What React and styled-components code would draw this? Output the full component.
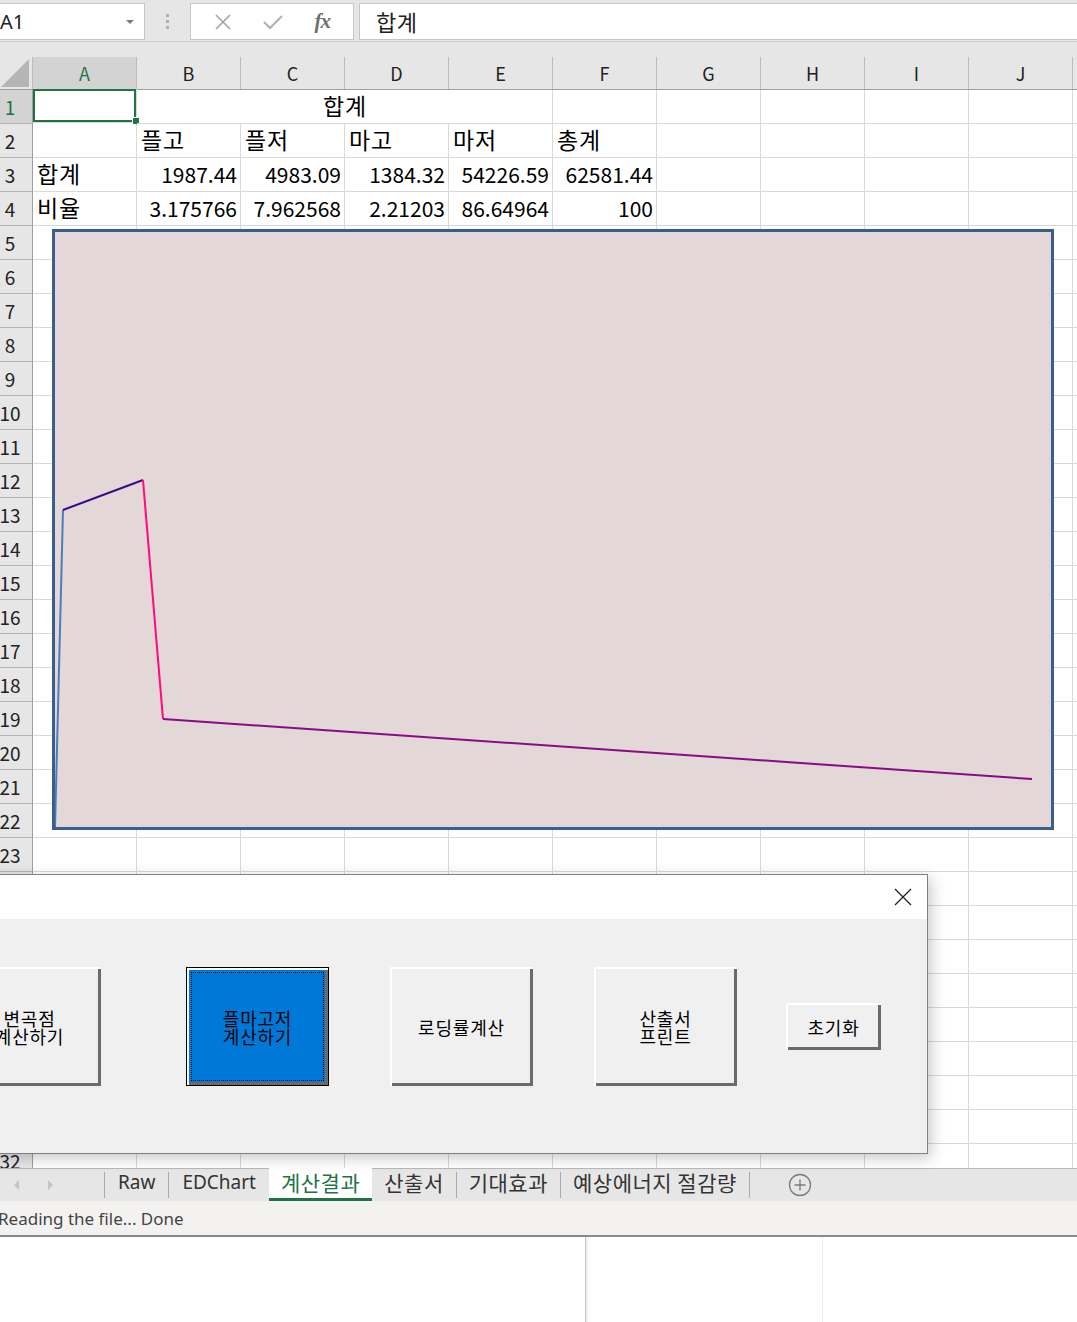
import React from 'react';
import styled, { createGlobalStyle } from 'styled-components';

const GlobalStyle = createGlobalStyle`
  html, body { margin: 0; padding: 0; background: #fff; }
  body { font-family: "Noto Sans CJK KR", "Noto Sans", sans-serif; }
  * { box-sizing: border-box; }
`;

const KR = `"Noto Sans CJK KR", "Noto Sans", sans-serif`;
const UI = `"Noto Sans", "Noto Sans CJK KR", sans-serif`;
const GREEN = '#217346';
const COLS = ['A', 'B', 'C', 'D', 'E', 'F', 'G', 'H', 'I', 'J', ''];
const TEMPLATE = '33px repeat(11, 104px)';
const isKorean = (s) => /[가-힣]/.test(s || '');

const rows = [
  { n: 1, cells: [{ v: '', sel: true }, { v: '합계', span: 4, align: 'center' }] },
  { n: 2, cells: [{ v: '' }, { v: '플고' }, { v: '플저' }, { v: '마고' }, { v: '마저' }, { v: '총계' }] },
  { n: 3, cells: [{ v: '합계' }, { v: '1987.44', align: 'right' }, { v: '4983.09', align: 'right' }, { v: '1384.32', align: 'right' }, { v: '54226.59', align: 'right' }, { v: '62581.44', align: 'right' }] },
  { n: 4, cells: [{ v: '비율' }, { v: '3.175766', align: 'right' }, { v: '7.962568', align: 'right' }, { v: '2.21203', align: 'right' }, { v: '86.64964', align: 'right' }, { v: '100', align: 'right' }] },
];

const Page = styled.div`
  position: relative;
  width: 1077px;
  height: 1322px;
  overflow: hidden;
  background: #fff;
`;

/* formula bar */
const FormulaBar = styled.div`
  display: flex;
  height: 42px;
  padding-top: 3px;
  padding-bottom: 1px;
  background: #e6e6e6;
  border-bottom: 1px solid #d0d0d0;
`;

const NameBox = styled.div`
  width: 146px;
  margin-left: -1px;
  background: #fff;
  border: 1px solid #c6c6c6;
  font-family: ${UI};
  font-size: 20px;
  color: #222;
  display: flex;
  align-items: center;
`;

const DropArrow = styled.span`
  margin-left: auto;
  margin-right: 10px;
  width: 0;
  height: 0;
  border-left: 4px solid transparent;
  border-right: 4px solid transparent;
  border-top: 4px solid #7a7a7a;
`;

const Grip = styled.div`
  width: 45px;
  display: flex;
  flex-direction: column;
  align-items: center;
  justify-content: center;
  gap: 3px;
  span {
    width: 3px;
    height: 3px;
    background: #b0b0b0;
  }
`;

const FxBox = styled.div`
  width: 164px;
  background: #fff;
  border: 1px solid #c6c6c6;
  display: flex;
  align-items: center;
  justify-content: space-around;
  padding: 0 8px;
`;

const FxText = styled.span`
  font-family: "Liberation Serif", serif;
  font-style: italic;
  font-weight: 700;
  font-size: 21px;
  color: #707070;
  letter-spacing: -1px;
`;

const FormulaInput = styled.div`
  flex: 1;
  margin-left: 5px;
  margin-right: -2px;
  background: #fff;
  border: 1px solid #c6c6c6;
  font-family: ${KR};
  font-size: 22px;
  letter-spacing: 0.5px;
  color: #222;
  display: flex;
  align-items: center;
  padding: 0 0 2px 16px;
`;

/* sheet */
const Sheet = styled.div`
  position: relative;
  height: 1126px;
  overflow: hidden;
  background: #fff;
`;

const HeaderRow = styled.div`
  display: grid;
  grid-template-columns: ${TEMPLATE};
  height: 48px;
  padding-top: 15px;
  background: #e6e6e6;
  border-bottom: 1px solid #9f9f9f;
`;

const Corner = styled.div`
  display: flex;
  align-items: flex-end;
  justify-content: flex-end;
  padding: 0 3px 2px 0;
  border-right: 1px solid #bdbdbd;
  &::before {
    content: '';
    width: 0;
    height: 0;
    border-left: 28px solid transparent;
    border-bottom: 28px solid #b5b5b5;
  }
`;

const ColHead = styled.div`
  display: flex;
  align-items: center;
  justify-content: center;
  border-right: 1px solid #bdbdbd;
  background: ${(p) => (p.$active ? '#d3d3d3' : 'transparent')};
  color: ${(p) => (p.$active ? GREEN : '#222')};
  font-family: ${KR};
  font-size: 18px;
`;

const Row = styled.div`
  display: grid;
  grid-template-columns: ${TEMPLATE};
  grid-template-rows: 34px;
  height: 34px;
`;

const RowHead = styled.div`
  background: ${(p) => (p.$active ? '#d3d3d3' : '#e6e6e6')};
  border-right: 1px solid #9f9f9f;
  border-bottom: 1px solid #b3b3b3;
  color: ${(p) => (p.$active ? GREEN : '#222')};
  font-family: ${KR};
  font-size: 19px;
  display: flex;
  align-items: center;
  overflow: hidden;
  span {
    width: 20px;
    white-space: nowrap;
    display: flex;
    justify-content: center;
  }
`;

const Cell = styled.div`
  position: relative;
  grid-column: span ${(p) => p.$span || 1};
  height: 34px;
  border-right: 1px solid #d9d9d9;
  border-bottom: 1px solid #d9d9d9;
  display: flex;
  align-items: center;
  justify-content: ${(p) => (p.$align === 'right' ? 'flex-end' : p.$align === 'center' ? 'center' : 'flex-start')};
  padding: 0 3px ${(p) => (p.$kr ? '3px' : '0')} 4px;
  font-family: ${KR};
  font-size: ${(p) => (p.$kr ? '23px' : '21px')};
  line-height: 1.15;
  letter-spacing: ${(p) => (p.$kr ? '0.8px' : '0')};
  color: #000;
  white-space: nowrap;
  ${(p) =>
    p.$sel &&
    `
    box-shadow: inset 0 0 0 2px ${GREEN};
    margin: -1px 0 0 0;
    &::after {
      content: '';
      position: absolute;
      right: -4px;
      bottom: -3px;
      width: 6px;
      height: 6px;
      background: ${GREEN};
      border: 1px solid #fff;
    }
  `}
`;

/* chart */
const Chart = styled.div`
  position: absolute;
  left: 52px;
  top: 187px;
  width: 1002px;
  height: 601px;
  background: #e3d7d7;
  border: 3px solid #3b5f8d;
  svg {
    display: block;
  }
`;

/* dialog */
const Dialog = styled.div`
  position: absolute;
  left: -60px;
  top: 874px;
  width: 988px;
  height: 280px;
  background: #f0f0f0;
  border: 1px solid #7f7f7f;
  box-shadow: 3px 4px 14px rgba(0, 0, 0, 0.22);
  display: flex;
  flex-direction: column;
`;

const TitleBar = styled.div`
  height: 44px;
  background: #fff;
  display: flex;
  align-items: center;
  justify-content: flex-end;
  padding-right: 15px;
`;

const DialogBody = styled.div`
  flex: 1;
  padding: 48px 0 0 17px;
`;

const ButtonRow = styled.div`
  display: flex;
  align-items: center;
  height: 119px;
`;

const FormButton = styled.div`
  width: ${(p) => p.$w}px;
  height: ${(p) => p.$h}px;
  margin-left: ${(p) => p.$ml || 0}px;
  display: flex;
  align-items: center;
  justify-content: center;
  text-align: center;
  font-family: ${KR};
  font-size: 18px;
  letter-spacing: 0.8px;
  line-height: 18px;
  color: #000;
  background: ${(p) => (p.$primary ? '#0078d7' : '#f0f0f0')};
  border: ${(p) => (p.$primary ? '1px solid #000' : 'none')};
  box-shadow: inset 2px 2px 0 #fff, inset -3px -3px 0 #6b6b6b;
  outline: ${(p) => (p.$primary ? '1px dotted #000' : 'none')};
  outline-offset: -6px;
  white-space: pre-line;
`;

/* tabs */
const TabBar = styled.div`
  display: flex;
  align-items: stretch;
  height: 33px;
  background: #e6e6e6;
  border-top: 1px solid #b9b9b9;
  color: #333;
`;

const TabNav = styled.div`
  width: 104px;
  display: flex;
  align-items: center;
  gap: 29px;
  padding-left: 14px;
`;

const NavArrow = styled.span`
  width: 0;
  height: 0;
  border-top: 5px solid transparent;
  border-bottom: 5px solid transparent;
  ${(p) => (p.$dir === 'left' ? 'border-right: 5px solid #c4c4c4;' : 'border-left: 5px solid #c4c4c4;')}
`;

const Sep = styled.span`
  width: 1px;
  height: 26px;
  align-self: center;
  background: #a9a9a9;
`;

const Tab = styled.div`
  display: flex;
  align-items: center;
  padding: 0 ${(p) => (p.$latin ? 13 : 12)}px 2px;
  font-family: ${(p) => (p.$latin ? UI : KR)};
  font-size: ${(p) => (p.$latin ? '19px' : '21px')};
  letter-spacing: ${(p) => (p.$latin ? '0' : '0.5px')};
  background: ${(p) => (p.$active ? '#fff' : 'transparent')};
  color: ${(p) => (p.$active ? GREEN : '#333')};
  border-bottom: 3px solid ${(p) => (p.$active ? GREEN : 'transparent')};
  margin-top: -1px;
`;

const AddSheet = styled.div`
  margin-left: 38px;
  display: flex;
  align-items: center;
`;

const StatusBar = styled.div`
  height: 36px;
  background: #f3f2f1;
  border-bottom: 2px solid #8c8c8c;
  display: flex;
  align-items: center;
  margin-left: -2px;
  font-family: ${UI};
  font-size: 17px;
  color: #444;
`;

const Below = styled.div`
  display: flex;
  height: 90px;
  background: #fff;
`;

const Pane = styled.div`
  width: ${(p) => p.$w}px;
  border-right: 1px solid ${(p) => p.$line};
  box-shadow: ${(p) => (p.$shadow ? '1px 0 3px rgba(0,0,0,0.12)' : 'none')};
`;

const CloseIcon = () => (
  <svg width="18" height="18" viewBox="0 0 18 18">
    <path d="M1 1 L17 17 M17 1 L1 17" stroke="#222" strokeWidth="1.3" fill="none" />
  </svg>
);

const buildRowCells = (r) => {
  const out = [];
  let used = 0;
  r.cells.forEach((c, i) => {
    out.push(
      <Cell key={i} $span={c.span} $align={c.align} $sel={c.sel} $kr={isKorean(c.v)}>
        {c.v}
      </Cell>
    );
    used += c.span || 1;
  });
  for (let i = used; i < 11; i++) out.push(<Cell key={'e' + i} />);
  return out;
};

export default function App() {
  const allRows = [];
  for (let n = 1; n <= 33; n++) {
    allRows.push(rows.find((x) => x.n === n) || { n, cells: [] });
  }

  return (
    <Page>
      <GlobalStyle />
      <FormulaBar>
        <NameBox>
          A1
          <DropArrow />
        </NameBox>
        <Grip>
          <span />
          <span />
          <span />
        </Grip>
        <FxBox>
          <svg width="18" height="18" viewBox="0 0 18 18">
            <path d="M2 2 L16 16 M16 2 L2 16" stroke="#a3a3a3" strokeWidth="1.6" fill="none" />
          </svg>
          <svg width="22" height="18" viewBox="0 0 22 18">
            <path d="M2 9 L8 15 L20 3" stroke="#b3b3b3" strokeWidth="2.2" fill="none" />
          </svg>
          <FxText>fx</FxText>
        </FxBox>
        <FormulaInput>합계</FormulaInput>
      </FormulaBar>

      <Sheet>
        <HeaderRow>
          <Corner />
          {COLS.map((c, i) => (
            <ColHead key={i} $active={c === 'A'}>
              {c}
            </ColHead>
          ))}
        </HeaderRow>
        {allRows.map((r) => (
          <Row key={r.n}>
            <RowHead $active={r.n === 1}>
              <span>{r.n}</span>
            </RowHead>
            {buildRowCells(r)}
          </Row>
        ))}

        <Chart>
          <svg width="996" height="595" viewBox="0 0 996 595">
            <line x1="0" y1="596" x2="8" y2="278" stroke="#4a7ebb" strokeWidth="2" />
            <line x1="8" y1="278" x2="88" y2="248" stroke="#3b0a8a" strokeWidth="2" />
            <line x1="88" y1="248" x2="108" y2="487" stroke="#ff0a80" strokeWidth="2" />
            <line x1="108" y1="487" x2="977" y2="547" stroke="#8a0a88" strokeWidth="2" />
          </svg>
        </Chart>
      </Sheet>

      <Dialog>
        <TitleBar>
          <CloseIcon />
        </TitleBar>
        <DialogBody>
          <ButtonRow>
            <FormButton $w={143} $h={119}>{'변곡점\n계산하기'}</FormButton>
            <FormButton $w={143} $h={119} $ml={85} $primary>{'플마고저\n계산하기'}</FormButton>
            <FormButton $w={143} $h={119} $ml={61}>로딩률계산</FormButton>
            <FormButton $w={143} $h={119} $ml={61}>{'산출서\n프린트'}</FormButton>
            <FormButton $w={95} $h={47} $ml={49}>초기화</FormButton>
          </ButtonRow>
        </DialogBody>
      </Dialog>

      <TabBar>
        <TabNav>
          <NavArrow $dir="left" />
          <NavArrow $dir="right" />
        </TabNav>
        <Sep />
        <Tab $latin>Raw</Tab>
        <Sep />
        <Tab $latin>EDChart</Tab>
        <Tab $active>계산결과</Tab>
        <Tab>산출서</Tab>
        <Sep />
        <Tab>기대효과</Tab>
        <Sep />
        <Tab>예상에너지 절감량</Tab>
        <Sep />
        <AddSheet>
          <svg width="24" height="24" viewBox="0 0 24 24">
            <circle cx="12" cy="12" r="10.5" stroke="#7b7b7b" strokeWidth="1.3" fill="none" />
            <path d="M12 6.5 V17.5 M6.5 12 H17.5" stroke="#7b7b7b" strokeWidth="1.3" />
          </svg>
        </AddSheet>
      </TabBar>
      <StatusBar>Reading the file... Done</StatusBar>
      <Below>
        <Pane $w={586} $line="#c4c4c4" $shadow />
        <Pane $w={237} $line="#efefef" />
      </Below>
    </Page>
  );
}
